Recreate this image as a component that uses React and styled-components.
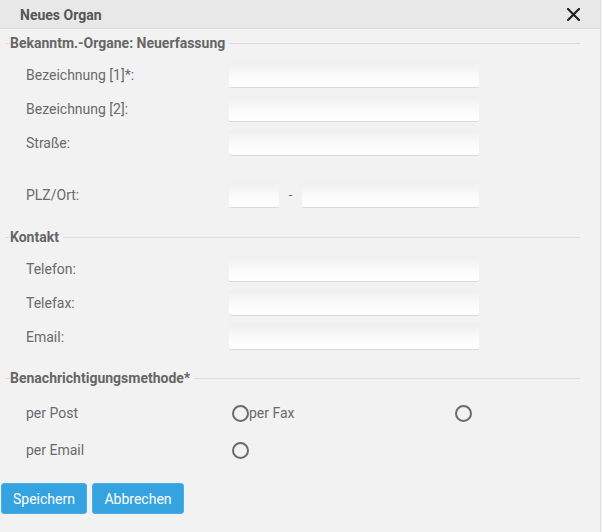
import React from "react";
import styled, { createGlobalStyle } from "styled-components";

const Global = createGlobalStyle`
  html, body { margin: 0; padding: 0; background: #f2f2f2; }
  body { font-family: Roboto, "Liberation Sans", Arial, sans-serif; }
  * { box-sizing: border-box; }
`;

const Dialog = styled.div`
  width: 601px;
  height: 532px;
  background: #f2f2f2;
  border-right: 1px solid #e0e0e0;
  display: flex;
  flex-direction: column;
`;

const TitleBar = styled.div`
  height: 29px;
  background: #e8e8e8;
  border-bottom: 1px solid #dcdcdc;
  display: flex;
  align-items: center;
  justify-content: space-between;
  padding: 0 20px 0 20px;
`;

const Title = styled.div`
  font-size: 14px;
  font-weight: 700;
  color: #555;
  padding-top: 2px;
`;

const Close = styled.button`
  border: 0;
  background: none;
  padding: 0;
  width: 14px;
  height: 14px;
  display: flex;
  align-items: center;
  justify-content: center;
  cursor: pointer;
`;

const Body = styled.div`
  padding: 6px 20px 0 0;
  display: flex;
  flex-direction: column;
`;

const Legend = styled.div`
  display: flex;
  align-items: center;
  height: 16px;
  margin-left: 5px;
  font-size: 14px;
  font-weight: 700;
  color: #666;
  margin-top: ${(p) => p.$top || 0}px;
  &::before {
    content: "";
    width: 5px;
    border-top: 1px solid #dcdcdc;
  }
  &::after {
    content: "";
    flex: 1;
    border-top: 1px solid #dcdcdc;
    margin-left: 4px;
  }
`;

const Fields = styled.div`
  display: flex;
  flex-direction: column;
  gap: 9px;
  margin-top: 11px;
  padding-left: 26px;
`;

const Row = styled.div`
  display: grid;
  grid-template-columns: 203px auto;
  align-items: center;
  height: 25px;
  margin-top: ${(p) => p.$extra || 0}px;
`;

const Label = styled.label`
  font-size: 14px;
  color: #6a6a6a;
`;

const Input = styled.input`
  width: ${(p) => p.$w || 250}px;
  height: 25px;
  border: 0;
  border-radius: 2px;
  background: linear-gradient(to bottom, #efefef 0%, #fbfbfb 60%, #ffffff 100%);
  box-shadow: 0 1px 0 #d9d9d9;
  outline: none;
  padding: 0 6px;
  font-family: inherit;
  font-size: 13px;
`;

const Pair = styled.div`
  display: flex;
  align-items: center;
`;

const Dash = styled.span`
  width: 23px;
  text-align: center;
  font-size: 13px;
  color: #666;
  line-height: 1;
`;

const RadioGrid = styled.div`
  display: grid;
  grid-template-columns: 206px 17px 206px 17px;
  grid-auto-rows: 17px;
  row-gap: 20px;
  align-items: center;
  margin-top: 19px;
  padding-left: 26px;
`;

const RadioLabel = styled.span`
  font-size: 14px;
  color: #6a6a6a;
  line-height: 17px;
`;

const Radio = styled.span`
  width: 17px;
  height: 17px;
  border-radius: 50%;
  border: 2px solid #6b6b6b;
  display: block;
`;

const Buttons = styled.div`
  display: flex;
  gap: 5px;
  margin-top: 24px;
  padding-left: 1px;
`;

const Button = styled.button`
  height: 31px;
  width: ${(p) => p.$w}px;
  background: #36a3e1;
  border: 1px solid #4aaee6;
  border-radius: 3px;
  color: #fff;
  font-family: inherit;
  font-size: 14px;
  padding: 0;
  cursor: pointer;
`;

function Field({ label, extra }) {
  return (
    <Row $extra={extra}>
      <Label>{label}</Label>
      <Input />
    </Row>
  );
}

export default function App() {
  return (
    <>
      <Global />
      <Dialog>
        <TitleBar>
          <Title>Neues Organ</Title>
          <Close aria-label="Schließen">
            <svg width="13" height="13" viewBox="0 0 13 13">
              <path d="M1 1 L12 12 M12 1 L1 12" stroke="#222" strokeWidth="2.2" strokeLinecap="square" />
            </svg>
          </Close>
        </TitleBar>
        <Body>
          <Legend>Bekanntm.-Organe: Neuerfassung</Legend>
          <Fields>
            <Field label="Bezeichnung [1]*:" />
            <Field label="Bezeichnung [2]:" />
            <Field label="Straße:" />
            <Row $extra={18}>
              <Label>PLZ/Ort:</Label>
              <Pair>
                <Input $w={50} />
                <Dash>-</Dash>
                <Input $w={177} />
              </Pair>
            </Row>
          </Fields>
          <Legend $top={22}>Kontakt</Legend>
          <Fields>
            <Field label="Telefon:" />
            <Field label="Telefax:" />
            <Field label="Email:" />
          </Fields>
          <Legend $top={21}>Benachrichtigungsmethode*</Legend>
          <RadioGrid>
            <RadioLabel>per Post</RadioLabel>
            <Radio />
            <RadioLabel>per Fax</RadioLabel>
            <Radio />
            <RadioLabel>per Email</RadioLabel>
            <Radio />
          </RadioGrid>
          <Buttons>
            <Button $w={86}>Speichern</Button>
            <Button $w={92}>Abbrechen</Button>
          </Buttons>
        </Body>
      </Dialog>
    </>
  );
}
